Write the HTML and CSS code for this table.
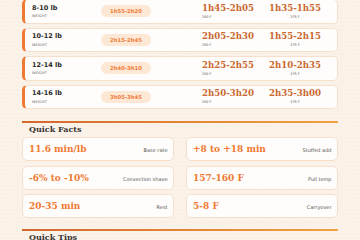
FILE: index.html
```html
<!DOCTYPE html>
<html lang="en">
<head>
<meta charset="utf-8">
<title>Turkey roast times</title>
<link rel="stylesheet" href="styles.css">
</head>
<body>
<main class="wrap">
  <div class="rows">
    <div class="row">
      <div class="w"><div class="w-name">8-10 lb</div><div class="w-label">Weight</div></div>
      <div class="pill">1h55-2h20</div>
      <div class="v v1"><div class="v-time">1h45-2h05</div><div class="v-label">350 F</div></div>
      <div class="v v2"><div class="v-time">1h35-1h55</div><div class="v-label">375 F</div></div>
    </div>
    <div class="row">
      <div class="w"><div class="w-name">10-12 lb</div><div class="w-label">Weight</div></div>
      <div class="pill">2h15-2h45</div>
      <div class="v v1"><div class="v-time">2h05-2h30</div><div class="v-label">350 F</div></div>
      <div class="v v2"><div class="v-time">1h55-2h15</div><div class="v-label">375 F</div></div>
    </div>
    <div class="row">
      <div class="w"><div class="w-name">12-14 lb</div><div class="w-label">Weight</div></div>
      <div class="pill">2h40-3h10</div>
      <div class="v v1"><div class="v-time">2h25-2h55</div><div class="v-label">350 F</div></div>
      <div class="v v2"><div class="v-time">2h10-2h35</div><div class="v-label">375 F</div></div>
    </div>
    <div class="row">
      <div class="w"><div class="w-name">14-16 lb</div><div class="w-label">Weight</div></div>
      <div class="pill">3h05-3h45</div>
      <div class="v v1"><div class="v-time">2h50-3h20</div><div class="v-label">350 F</div></div>
      <div class="v v2"><div class="v-time">2h35-3h00</div><div class="v-label">375 F</div></div>
    </div>
  </div>

  <section class="sec">
    <div class="rule"></div>
    <h2 class="sec-title">Quick Facts</h2>
    <div class="facts">
      <div class="fact"><span class="f-val">11.6 min/lb</span><span class="f-label">Base rate</span></div>
      <div class="fact"><span class="f-val">+8 to +18 min</span><span class="f-label">Stuffed add</span></div>
      <div class="fact"><span class="f-val">-6% to -10%</span><span class="f-label">Convection shave</span></div>
      <div class="fact"><span class="f-val">157-160 F</span><span class="f-label">Pull temp</span></div>
      <div class="fact"><span class="f-val">20-35 min</span><span class="f-label">Rest</span></div>
      <div class="fact"><span class="f-val">5-8 F</span><span class="f-label">Carryover</span></div>
    </div>
  </section>

  <section class="sec sec-tips">
    <div class="rule"></div>
    <h2 class="sec-title">Quick Tips</h2>
  </section>
</main>
</body>
</html>
```
FILE: styles.css
```css
html, body {
  margin: 0;
  padding: 0;
}
body {
  background-color: #fbf3ea;
  background-image:
    radial-gradient(rgba(210, 170, 130, 0.10) 0.6px, transparent 0.8px),
    radial-gradient(rgba(210, 170, 130, 0.08) 0.6px, transparent 0.8px);
  background-size: 4px 4px, 6px 6px;
  background-position: 0 0, 2px 3px;
  font-family: "DejaVu Sans", sans-serif;
  color: #2b2b2b;
  overflow: hidden;
}
.wrap {
  margin-top: -1px;
  padding: 0 22.5px 0 21.5px;
}
.rows {
  display: flex;
  flex-direction: column;
  gap: 4px;
}
.row {
  box-sizing: border-box;
  height: 24.5px;
  background: #fffdfb;
  border: 1px solid #f6e0cc;
  border-left: 3px solid #ef7a33;
  border-radius: 5px 5px 5px 5px;
  display: grid;
  grid-template-columns: 69px 50px 111px 66px;
  align-items: center;
  padding: 0 8px 0 7.5px;
}
.w-name {
  font-weight: bold;
  font-size: 6.5px;
  line-height: 7.5px;
  color: #2a2a2a;
}
.w-label {
  font-size: 3.4px;
  line-height: 4px;
  margin-top: 2px;
  text-transform: uppercase;
  letter-spacing: 0.2px;
  color: #555;
}
.pill {
  height: 12px;
  border-radius: 6px;
  background: #fde8d5;
  color: #ef7b35;
  font-weight: bold;
  font-size: 5.3px;
  line-height: 12px;
  text-align: center;
}
.v1 {
  padding-left: 51px;
}
.v2 {
  text-align: center;
}
.v-time {
  font-family: "DejaVu Serif", serif;
  font-weight: bold;
  font-size: 8.6px;
  line-height: 9px;
  color: #c9682f;
}
.v-label {
  font-size: 3.4px;
  line-height: 4px;
  margin-top: 2px;
  color: #555;
}
.sec {
  margin-top: 12px;
}
.sec-tips {
  margin-top: 11.3px;
}
.rule {
  height: 1.5px;
  background: linear-gradient(90deg, #d3682b, #f1a142);
}
.sec-title {
  margin: 0 0 3.5px;
  padding: 1px 7.5px 0;
  font-family: "DejaVu Serif", serif;
  font-weight: bold;
  font-size: 8px;
  line-height: 10px;
  color: #3a3533;
}
.facts {
  display: grid;
  grid-template-columns: 1fr 1fr;
  column-gap: 12px;
  row-gap: 4.5px;
}
.fact {
  box-sizing: border-box;
  height: 24px;
  background: #fffdfb;
  border: 1px solid #f6e0cc;
  border-radius: 5px;
  display: flex;
  justify-content: space-between;
  align-items: baseline;
  padding: 6.4px 5px 0 6.5px;
}
.f-val {
  font-family: "DejaVu Serif", serif;
  font-weight: bold;
  font-size: 9px;
  line-height: 11px;
  color: #ef7a33;
}
.f-label {
  font-size: 5px;
  line-height: 6px;
  color: #555;
}
```
